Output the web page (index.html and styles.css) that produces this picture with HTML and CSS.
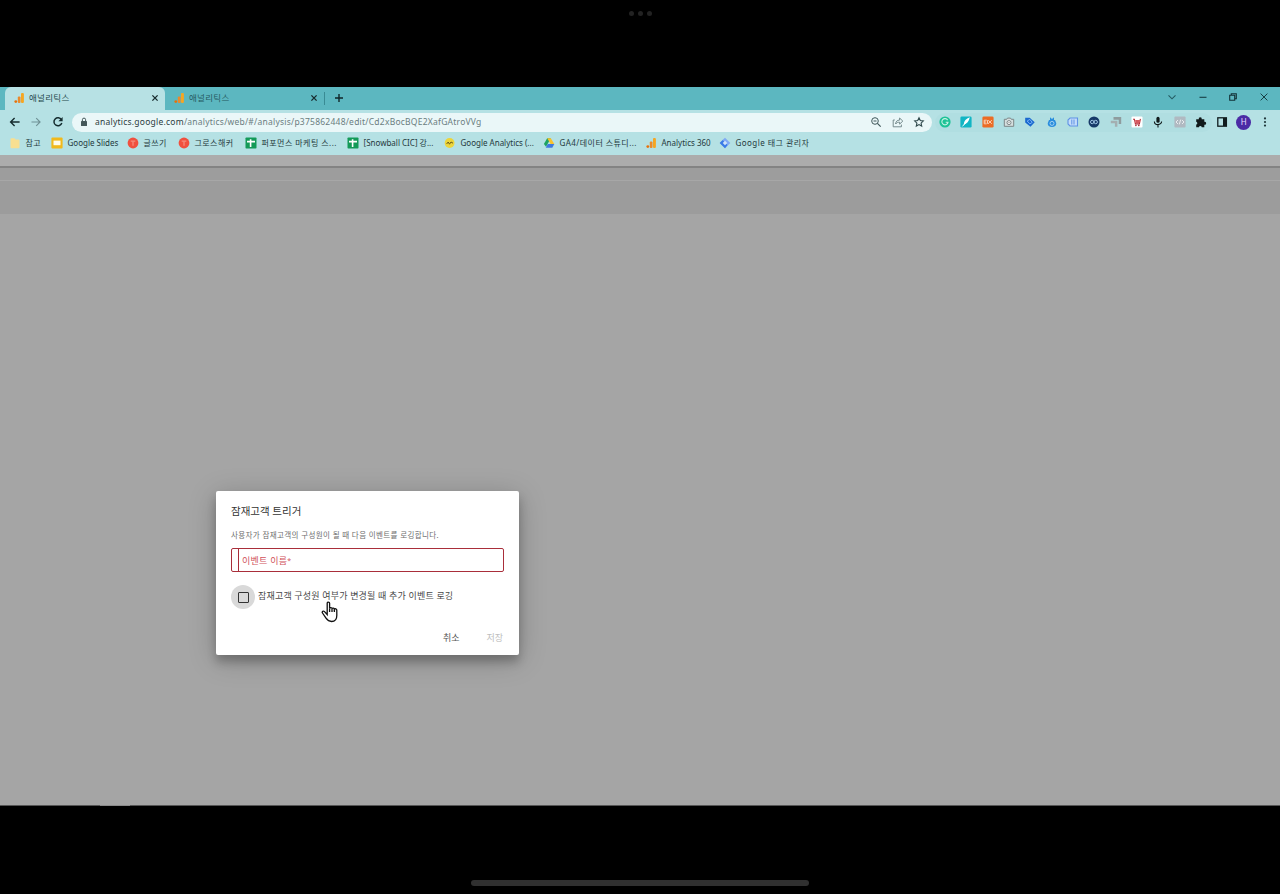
FILE: index.html
```html
<!DOCTYPE html>
<html lang="ko">
<head>
    <meta charset="UTF-8">
    <meta name="viewport" content="width=device-width, initial-scale=1.0">
    <title>애널리틱스</title>
    <link rel="stylesheet" href="styles.css">
</head>
<body>
    <svg class="defs" width="0" height="0">
        <symbol id="ga" viewBox="0 0 12 12">
            <rect x="8" y="1" width="2.9" height="10" rx="1" fill="#f5a623"/>
            <rect x="4.8" y="4.5" width="2.7" height="6.5" rx="1" fill="#ea8a2c"/>
            <circle cx="2.8" cy="9.6" r="1.4" fill="#e8710a"/>
        </symbol>
        <symbol id="close" viewBox="0 0 12 12">
            <path d="M3.4 3.4l5.2 5.2M8.6 3.4L3.4 8.6" stroke="#16292c" stroke-width="1.3"/>
        </symbol>
        <symbol id="sheet" viewBox="0 0 12 12">
            <rect x=".5" y=".5" width="11" height="11" rx=".8" fill="#149a58"/>
            <path d="M2 4.6h8M5.6 2.2v7.8" stroke="#fff" stroke-width="1.6"/>
        </symbol>
        <symbol id="tistory" viewBox="0 0 12 12">
            <circle cx="6" cy="6" r="5.4" fill="#f0503f"/>
            <path d="M3.7 4.2h4.6M6 4.2v4.6" stroke="#f58a7c" stroke-width="1.3"/>
        </symbol>
    </svg>

    <header class="system-top">
        <span class="dot"></span><span class="dot"></span><span class="dot"></span>
    </header>

    <div class="browser">
        <div class="tabs">
            <div class="tab active">
                <svg class="icon"><use href="#ga"/></svg>
                <span class="tab-title">애널리틱스</span>
                <svg class="icon"><use href="#close"/></svg>
            </div>
            <div class="tab">
                <svg class="icon"><use href="#ga"/></svg>
                <span class="tab-title">애널리틱스</span>
                <svg class="icon"><use href="#close"/></svg>
            </div>
            <svg class="new-tab" viewBox="0 0 12 12"><path d="M6 2v8M2 6h8" stroke="#10272a" stroke-width="1.4"/></svg>
            <div class="window-buttons">
                <svg class="icon" viewBox="0 0 12 12"><path d="M2.5 4.3L6 7.8l3.5-3.5" fill="none" stroke="#245b62" stroke-width="1.1"/></svg>
                <svg class="icon" viewBox="0 0 12 12"><path d="M2.5 6.3h7" stroke="#173f44" stroke-width="1.1"/></svg>
                <svg class="icon" viewBox="0 0 12 12"><path d="M2.7 4.3h5v5h-5zM4.3 4.3V2.7h5v5H7.7" fill="none" stroke="#123338" stroke-width="1.1"/></svg>
                <svg class="icon" viewBox="0 0 12 12"><path d="M2.6 2.6l6.8 6.8M9.4 2.6L2.6 9.4" stroke="#173f44" stroke-width="1"/></svg>
            </div>
        </div>

        <div class="toolbar">
            <div class="nav">
                <svg class="icon" viewBox="0 0 12 12"><path d="M10.6 6H1.8M5.6 2L1.6 6l4 4" fill="none" stroke="#142b2e" stroke-width="1.4"/></svg>
                <svg class="icon" viewBox="0 0 12 12"><path d="M1.5 6h8.7M6.2 2.1L10.1 6l-3.9 3.9" fill="none" stroke="#6f9195" stroke-width="1.1"/></svg>
                <svg class="icon" viewBox="0 0 12 12"><path d="M9.4 3.7A4 4 0 1 0 9.8 7" fill="none" stroke="#142b2e" stroke-width="1.5"/><path d="M10.6 1v4.2H6.4z" fill="#142b2e"/></svg>
            </div>
            <div class="omnibox">
                <svg class="lock" viewBox="0 0 8 10"><rect x="1" y="4" width="6" height="5" rx=".6" fill="#45585a"/><path d="M2.4 4V2.7a1.6 1.6 0 0 1 3.2 0V4" fill="none" stroke="#45585a"/></svg>
                <span class="url"><b>analytics.google.com</b>/analytics/web/#/analysis/p375862448/edit/Cd2xBocBQE2XafGAtroVVg</span>
                <div class="omnibox-actions">
                    <svg class="icon" viewBox="0 0 12 12"><circle cx="5" cy="5" r="3.3" fill="none" stroke="#40585b"/><path d="M3.5 5h3M7.4 7.4l3.3 3.3" stroke="#40585b" stroke-width="1.2"/></svg>
                    <svg class="icon" viewBox="0 0 12 12"><path d="M2.8 4H1.2v6.8h8.2V8.6M3.6 8c.2-2.7 1.6-3.8 4-3.9V2l3.2 3.1-3.2 3V6.2c-1.8 0-2.9.4-4 1.8z" fill="none" stroke="#6a8082" stroke-width=".9"/></svg>
                    <svg class="icon" viewBox="0 0 12 12"><path d="M6 1.8l1.3 2.8 3 .4-2.2 2.1.6 3L6 8.6l-2.7 1.5.6-3L1.7 5l3-.4z" fill="none" stroke="#314a4d" stroke-width="1.1"/></svg>
                </div>
            </div>
            <div class="extensions">
                <svg class="icon" viewBox="0 0 12 12"><circle cx="6" cy="6" r="5.6" fill="#1dc296"/><path d="M8.6 4.1A3.1 3.1 0 1 0 9 6.3H6.7" fill="none" stroke="#c8f3e6" stroke-width="1.1"/></svg>
                <svg class="icon" viewBox="0 0 12 12"><rect x=".4" y=".4" width="11.2" height="11.2" rx="1.4" fill="#12b5c4"/><path d="M9.8 1.3C6 2.5 4 5 3.7 8.7c3-.9 5.4-3.3 6.1-7.4z" fill="#fff"/><path d="M2.4 10.4L6 6.4" stroke="#fff"/></svg>
                <svg class="icon" viewBox="0 0 12 12"><rect x=".4" y=".4" width="11.2" height="11.2" rx="1.4" fill="#ec6c25"/><path d="M4.7 4.2H2.2v3.6h2.5M2.2 6h2M5.5 4.2v3.6M9.8 4.2L6 7.8M6.3 4.2l3.5 3.6" fill="none" stroke="#fbd2b6"/></svg>
                <svg class="icon" viewBox="0 0 12 12"><path d="M1.3 3.3h2.4l.8-1.2h3l.8 1.2h2.4v7H1.3z" fill="#d5dfdf" stroke="#7c8586"/><circle cx="6" cy="6.6" r="2" fill="#f7fafa" stroke="#7c8586"/><circle cx="6" cy="6.6" r=".6" fill="#777"/></svg>
                <svg class="icon" viewBox="0 0 12 12"><path d="M1.2 1.7h4.5l5 4.5-4.2 4.6-5.3-4.4z" fill="#1a69cf"/><path d="M3.2 5l2.6-1.6 2.4 3-2.3 1.5z" fill="none" stroke="#8fc3ff" stroke-width=".8"/></svg>
                <svg class="icon" viewBox="0 0 12 12"><path d="M4 1.2L6 3l2-1.8V4h1l1.3 3.2A4.3 3.9 0 0 1 6 11 4.3 3.9 0 0 1 1.7 7.2L3 4h1z" fill="#2a8ddd"/><circle cx="6" cy="7.4" r="2" fill="none" stroke="#bce0f5" stroke-width=".8"/></svg>
                <svg class="icon" viewBox="0 0 12 12"><path d="M3 2h7.5v8H3L1 8V4z" fill="#c3dcfa" stroke="#5f92e5" stroke-width="1.1"/><path d="M4.8 3.5v5M7 3.5v5" stroke="#5f92e5"/></svg>
                <svg class="icon" viewBox="0 0 12 12"><circle cx="6" cy="6" r="5.5" fill="#173968"/><circle cx="4.2" cy="6" r="1.7" fill="none" stroke="#9fc5e5"/><circle cx="7.7" cy="6" r="1.7" fill="none" stroke="#9fc5e5"/></svg>
                <svg class="icon" viewBox="0 0 12 12"><path d="M3.5 1h7.7v7H8.7V3.8H3.5z" fill="#8f9c9e"/><path d="M.8 4.8h6.6v6H4.9V7.2H.8z" fill="#a4afb1"/></svg>
                <svg class="icon" viewBox="0 0 12 12"><rect x=".5" y=".5" width="11" height="11" rx="1" fill="#fff"/><path d="M2 3.2h1.4l1 4.7h4l1-5" fill="none" stroke="#b82e38" stroke-width="1.1"/><path d="M4.2 4h5L8 7H4.7z" fill="#d65a60"/><circle cx="4.9" cy="9.4" r=".8" fill="#a52430"/><circle cx="7.8" cy="9.4" r=".8" fill="#a52430"/></svg>
                <svg class="icon" viewBox="0 0 12 12"><rect x="4.4" y=".8" width="3.2" height="6" rx="1.6" fill="#10191a"/><path d="M2.4 5.4a3.6 3.2 0 0 0 7.2 0M6 8.5v2.9" fill="none" stroke="#10191a" stroke-width="1.1"/></svg>
                <svg class="icon" viewBox="0 0 12 12"><rect x=".4" y=".4" width="11.2" height="11.2" rx="1" fill="#b0b9c1"/><path d="M4 4L2 6l2 2M8 4l2 2-2 2M6.7 3.6L5.3 8.4" fill="none" stroke="#eef1f3" stroke-width=".9"/></svg>
                <svg class="icon" viewBox="0 0 12 12"><path d="M1.2 3.2h2.6a1.5 1.5 0 1 1 2.9 0h2.6v2.6a1.5 1.5 0 1 1 0 2.9v2.5H6.8a1.5 1.5 0 0 0-2.9 0H1.2V8.6a1.5 1.5 0 0 0 0-2.9z" fill="#10191a"/></svg>
            </div>
            <div class="profile">
                <svg class="icon" viewBox="0 0 12 12"><rect x="1.8" y="1.8" width="8.6" height="8.4" fill="none" stroke="#101c1e" stroke-width="1.3"/><path d="M7 2h3.5v8H7z" fill="#101c1e"/></svg>
                <span class="avatar">H</span>
                <svg class="icon" viewBox="0 0 12 12"><circle cx="6" cy="2.4" r="1.1" fill="#20383b"/><circle cx="6" cy="6" r="1.1" fill="#20383b"/><circle cx="6" cy="9.6" r="1.1" fill="#20383b"/></svg>
            </div>
        </div>

        <nav class="bookmarks">
            <span class="bookmark"><svg class="icon" viewBox="0 0 12 12"><path d="M1.5 2.2a1 1 0 0 1 1-1h3l1 1.2h3a1 1 0 0 1 1 1v6.9a1 1 0 0 1-1 1h-7a1 1 0 0 1-1-1z" fill="#f8df91"/></svg><span class="wide">참고</span></span>
            <span class="bookmark"><svg class="icon" viewBox="0 0 12 12"><rect x=".4" y=".6" width="11.2" height="10.8" rx="1" fill="#f1b91c"/><rect x="2.5" y="3.6" width="7" height="4.6" fill="#fffbe9"/></svg><span>Google Slides</span></span>
            <span class="bookmark"><svg class="icon"><use href="#tistory"/></svg><span class="wide">글쓰기</span></span>
            <span class="bookmark"><svg class="icon"><use href="#tistory"/></svg><span class="wide">그로스해커</span></span>
            <span class="bookmark"><svg class="icon"><use href="#sheet"/></svg><span class="wide">퍼포먼스 마케팅 스...</span></span>
            <span class="bookmark"><svg class="icon"><use href="#sheet"/></svg><span>[Snowball CIC] 강...</span></span>
            <span class="bookmark"><svg class="icon" viewBox="0 0 12 12"><circle cx="5.6" cy="6" r="4.9" fill="#ecd53b"/><path d="M2.6 7l1.6-2 1.3 2.2L7 5l2 1.2" fill="none" stroke="#6b5c1c"/></svg><span>Google Analytics (...</span></span>
            <span class="bookmark"><svg class="icon" viewBox="0 0 12 12"><path d="M4.2 1.2h3.6L3 9.8.9 7z" fill="#1ea362"/><path d="M4.2 1.2h3.6L11.3 7H7.6z" fill="#f9c22b"/><path d="M4.7 7h6.6l-2 3.8H2.7z" fill="#3f79df"/></svg><span class="wide">GA4/데이터 스튜디...</span></span>
            <span class="bookmark"><svg class="icon"><use href="#ga"/></svg><span>Analytics 360</span></span>
            <span class="bookmark"><svg class="icon" viewBox="0 0 12 12"><path d="M6 .7L11.3 6 6 11.3.7 6z" fill="#7fa9f5"/><path d="M6 .7L3.6 3.1 8.5 8 6 11.3.7 6z" fill="#397be6"/><path d="M6 3.8L8.2 6 6 8.2 3.8 6z" fill="#cfe4fb"/></svg><span class="wide">Google 태그 관리자</span></span>
        </nav>

        <main class="page">
            <div class="app-bar"></div>
            <div class="sub-bar"></div>
            <div class="tab-bar"></div>

            <section class="dialog">
                <h2>잠재고객 트리거</h2>
                <p>사용자가 잠재고객의 구성원이 될 때 다음 이벤트를 로깅합니다.</p>
                <div class="field">
                    <span class="notch"></span>
                    <label>이벤트 이름<sup>*</sup></label>
                </div>
                <div class="option">
                    <span class="ripple"><span class="checkbox"></span></span>
                    <span class="option-label">잠재고객 구성원 여부가 변경될 때 추가 이벤트 로깅</span>
                </div>
                <div class="actions">
                    <span class="cancel">취소</span>
                    <span class="save">저장</span>
                </div>
                <svg class="cursor" viewBox="0 0 18 22">
                    <path d="M6.2 13.5V2.3c0-1.7 2.4-1.7 2.4 0v5.2c.3-1.2 2.3-1 2.4.3.4-1.1 2.3-.8 2.4.5.5-.9 2.4-.6 2.4.9v5.3c0 3.5-1.8 6-5.2 6-2.8 0-4.2-1.2-5.6-3.3L1.5 12c-.9-1.4.9-2.6 2-1.4z" fill="#fff" stroke="#111" stroke-width="1.3"/>
                    <path d="M8.6 7.5v3.6M11 8v3.1M13.4 8.6v2.5" stroke="#111" stroke-width="1.3"/>
                </svg>
            </section>

            <span class="status-edge"></span>
        </main>
    </div>

    <footer class="system-bottom">
        <span class="home-indicator"></span>
    </footer>
</body>
</html>
```
FILE: styles.css
```css
* {
    box-sizing: border-box;
}
body {
    margin: 0;
    height: 894px;
    overflow: hidden;
    background-color: #000;
    font-family: "Noto Sans", "Noto Sans CJK KR", sans-serif;
    display: flex;
    flex-direction: column;
}
svg {
    display: block;
    flex: none;
}
.defs {
    position: absolute;
}
.icon {
    width: 12px;
    height: 12px;
}
.system-top {
    height: 87px;
    display: flex;
    justify-content: center;
    gap: 4px;
    padding-top: 11px;
    flex: none;
}
.dot {
    width: 5px;
    height: 5px;
    border-radius: 50%;
    background-color: #222;
}
.browser {
    height: 719px;
    flex: none;
    display: flex;
    flex-direction: column;
}

/* tabs */
.tabs {
    height: 23px;
    background-color: #5cb7c0;
    display: flex;
    align-items: center;
    padding-left: 5px;
}
.tab {
    width: 160px;
    height: 23px;
    display: flex;
    align-items: center;
    padding: 0 4px 0 8px;
    font-size: 8.5px;
    color: #24474b;
}
.tab.active {
    background-color: #b7e1e4;
    border-radius: 6px 6px 0 0;
}
.tab:not(.active) {
    border-right: 1px solid #398b94;
    height: 13px;
    color: #265a61;
}
.tab .icon {
    margin-bottom: 1px;
}
.tab-title {
    flex: 1;
    margin-left: 4px;
    padding-bottom: 3px;
    letter-spacing: 0.3px;
}
.new-tab {
    width: 12px;
    height: 12px;
    margin: 0 0 1px 8px;
}
.window-buttons {
    margin-left: auto;
    display: flex;
    gap: 18.6px;
    padding: 0 10px 3px 0;
}

/* toolbar */
.toolbar {
    height: 24px;
    background-color: #b5e1e4;
    display: flex;
    align-items: center;
    padding-left: 9px;
}
.nav {
    display: flex;
    gap: 9.4px;
    width: 63px;
}
.omnibox {
    width: 860px;
    height: 19px;
    border-radius: 10px;
    background-color: #eaf7f8;
    display: flex;
    align-items: center;
    padding: 0 7px 0 8px;
}
.lock {
    width: 8px;
    height: 10px;
}
.url {
    margin-left: 7px;
    padding-bottom: 1px;
    font-size: 8.5px;
    letter-spacing: 0.235px;
    color: #6b7d7f;
    white-space: nowrap;
}
.url b {
    font-weight: normal;
    color: #2a3b3d;
}
.omnibox-actions {
    margin-left: auto;
    display: flex;
    gap: 9.4px;
}
.extensions {
    margin-left: 3px;
    height: 19px;
    width: 277px;
    border-radius: 10px;
    background-color: #b0dee1;
    display: flex;
    align-items: center;
    gap: 9.35px;
    padding-left: 4px;
}
.profile {
    display: flex;
    align-items: center;
    gap: 8.2px;
    margin-left: 4px;
}
.avatar {
    width: 15px;
    height: 15px;
    border-radius: 50%;
    background-color: #4b2ba5;
    color: #e5dcff;
    font-size: 8px;
    line-height: 14px;
    text-align: center;
}

/* bookmarks */
.bookmarks {
    height: 21px;
    background-color: #b5e1e4;
    display: grid;
    grid-template-columns: 42px 76px 51px 67px 102px 97px 99px 102px 74px 100px;
    align-items: center;
    padding: 0 0 3px 9px;
    font-size: 8px;
    color: #24393c;
    white-space: nowrap;
}
.bookmark {
    display: flex;
    align-items: center;
    gap: 4.5px;
}
.bookmark span {
    padding-bottom: 2px;
}
.bookmark .wide {
    letter-spacing: 0.45px;
}

/* page behind the dialog */
.page {
    flex: 1;
    background-color: #a5a5a5;
    border-bottom: 1px solid #555;
    position: relative;
}
.app-bar {
    height: 13px;
    background-color: #acacac;
    border-bottom: 2px solid #838383;
}
.sub-bar {
    height: 13px;
    background-color: #9d9d9d;
    border-bottom: 1px solid #a7a7a7;
}
.tab-bar {
    height: 33px;
    background-color: #9c9c9c;
}
.status-edge {
    position: absolute;
    left: 100px;
    bottom: -1px;
    width: 30px;
    height: 1px;
    background-color: #8a8a8a;
}

/* dialog */
.dialog {
    position: absolute;
    left: 216px;
    top: 335.5px;
    width: 303px;
    height: 164px;
    padding: 13px 15px 0;
    background-color: #fff;
    border-radius: 2px;
    box-shadow: 0 7px 10px rgba(0, 0, 0, 0.22), 0 5px 28px rgba(0, 0, 0, 0.22);
}
.dialog h2 {
    margin: 0;
    font-size: 10.5px;
    line-height: 15px;
    font-weight: normal;
    color: #333;
}
.dialog p {
    margin: 10px 0 7px;
    font-size: 7.5px;
    line-height: 12px;
    letter-spacing: 0.38px;
    color: #6d6d6d;
    white-space: nowrap;
}
.field {
    height: 24px;
    border: 1.5px solid #a92e3a;
    border-radius: 2px;
    display: flex;
    align-items: center;
}
.notch {
    width: 7px;
    height: 22px;
    border-right: 1px solid #a92e3a;
}
.field label {
    margin: 3px 0 0 3px;
    font-size: 9px;
    line-height: 14px;
    letter-spacing: 0.25px;
    color: #d1525b;
}
.field sup {
    font-size: 7px;
    line-height: 0;
    vertical-align: 1px;
}
.option {
    margin-top: 13px;
    height: 24px;
    display: flex;
    align-items: center;
}
.ripple {
    width: 24px;
    height: 24px;
    border-radius: 50%;
    background-color: #d9d9d9;
    display: flex;
    align-items: center;
    justify-content: center;
}
.checkbox {
    width: 11px;
    height: 11px;
    border: 1.5px solid #333;
    border-radius: 1px;
    margin: 1px 0 0 1px;
}
.option-label {
    margin-left: 3px;
    padding-bottom: 3px;
    font-size: 9px;
    letter-spacing: 0.18px;
    color: #484848;
    white-space: nowrap;
}
.actions {
    margin: 22px 1px 0 0;
    display: flex;
    justify-content: flex-end;
    gap: 27px;
    font-size: 9px;
    line-height: 14px;
    color: #555;
}
.save {
    color: #bdbdbd;
}
.cursor {
    position: absolute;
    left: 105px;
    top: 110px;
    width: 18px;
    height: 22px;
}

.system-bottom {
    flex: 1;
    display: flex;
    justify-content: center;
    align-items: flex-end;
    padding-bottom: 8px;
}
.home-indicator {
    width: 338px;
    height: 6px;
    border-radius: 3px;
    background-color: #303030;
}
```
